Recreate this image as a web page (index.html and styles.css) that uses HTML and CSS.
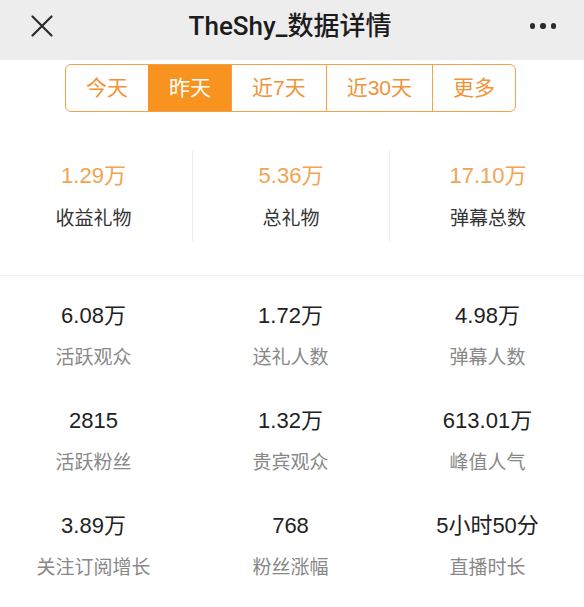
FILE: index.html
```html
<!DOCTYPE html>
<html lang="zh-CN">
<head>
<meta charset="utf-8">
<title>TheShy_数据详情</title>
<link rel="stylesheet" href="styles.css">
</head>
<body>
<div class="page">
  <header class="nav">
    <div class="nav-row">
      <div class="nav-left">
        <svg class="icon-close" width="22" height="22" viewBox="0 0 22 22"><path d="M1.5 1.5 L20.5 20.5 M20.5 1.5 L1.5 20.5" stroke="#2b2b2b" stroke-width="2.2" stroke-linecap="round" fill="none"/></svg>
      </div>
      <h1 class="nav-title">TheShy_数据详情</h1>
      <div class="nav-right">
        <span class="dot"></span><span class="dot"></span><span class="dot"></span>
      </div>
    </div>
  </header>

  <div class="tabs-wrap">
    <div class="tabs">
      <div class="tab">今天</div>
      <div class="tab active">昨天</div>
      <div class="tab">近7天</div>
      <div class="tab">近30天</div>
      <div class="tab">更多</div>
    </div>
  </div>

  <section class="summary">
    <div class="sum-item">
      <div class="sum-value">1.29万</div>
      <div class="sum-label">收益礼物</div>
    </div>
    <div class="sum-item">
      <div class="sum-value">5.36万</div>
      <div class="sum-label">总礼物</div>
    </div>
    <div class="sum-item">
      <div class="sum-value">17.10万</div>
      <div class="sum-label">弹幕总数</div>
    </div>
  </section>

  <section class="grid">
    <div class="cell"><div class="cell-value">6.08万</div><div class="cell-label">活跃观众</div></div>
    <div class="cell"><div class="cell-value">1.72万</div><div class="cell-label">送礼人数</div></div>
    <div class="cell"><div class="cell-value">4.98万</div><div class="cell-label">弹幕人数</div></div>
    <div class="cell"><div class="cell-value">2815</div><div class="cell-label">活跃粉丝</div></div>
    <div class="cell"><div class="cell-value">1.32万</div><div class="cell-label">贵宾观众</div></div>
    <div class="cell"><div class="cell-value">613.01万</div><div class="cell-label">峰值人气</div></div>
    <div class="cell"><div class="cell-value">3.89万</div><div class="cell-label">关注订阅增长</div></div>
    <div class="cell"><div class="cell-value">768</div><div class="cell-label">粉丝涨幅</div></div>
    <div class="cell"><div class="cell-value">5小时50分</div><div class="cell-label">直播时长</div></div>
  </section>
</div>
</body>
</html>
```

FILE: styles.css
```css
html, body {
  margin: 0;
  padding: 0;
  background: #ffffff;
}
body {
  font-family: "Liberation Sans", "Noto Sans CJK SC", sans-serif;
  color: #222;
  overflow: hidden;
}
.page {
  width: 591px;
  margin-left: -5px;
}
.nav {
  height: 60px;
  background: #ededed;
  margin-left: 5px;
  width: 584px;
}
.nav-row {
  height: 52px;
  display: grid;
  grid-template-columns: 1fr auto 1fr;
  align-items: center;
}
.nav-left {
  padding-left: 31px;
  display: flex;
  align-items: center;
}
.icon-close {
  display: block;
}
.nav-title {
  margin: 0;
  font-family: Roboto, "Noto Sans CJK SC", sans-serif;
  font-size: 26px;
  font-weight: 500;
  color: #1c1c1c;
  line-height: 30px;
  position: relative;
  left: -2px;
}
.nav-right {
  display: flex;
  justify-content: flex-end;
  gap: 5px;
  padding-right: 28px;
}
.dot {
  width: 5.5px;
  height: 5.5px;
  border-radius: 50%;
  background: #2b2b2b;
}
.tabs-wrap {
  display: flex;
  justify-content: center;
  margin-top: 4px;
}
.tabs {
  display: flex;
  border: 1.5px solid #f2a14d;
  border-radius: 6px;
  overflow: hidden;
  height: 46px;
}
.tab {
  padding: 0 20px;
  font-size: 21px;
  line-height: 46px;
  color: #ef9438;
  border-left: 1.5px solid #f2a14d;
}
.tab:first-child {
  border-left: none;
}
.tab.active {
  background: #f7931e;
  color: #ffffff;
  border-left-color: #f7931e;
}
.summary {
  display: grid;
  grid-template-columns: repeat(3, 1fr);
  margin-top: 38px;
  padding-bottom: 33px;
  border-bottom: 1px solid #efefef;
}
.sum-item {
  height: 92px;
  box-sizing: border-box;
  padding-top: 14px;
  text-align: center;
  border-left: 1.5px solid #eeeeee;
}
.sum-item:first-child {
  border-left: none;
}
.sum-value {
  font-size: 22px;
  line-height: 24px;
  color: #f4a352;
}
.sum-label {
  margin-top: 19px;
  font-size: 19px;
  line-height: 24px;
  color: #333;
}
.grid {
  display: grid;
  grid-template-columns: repeat(3, 1fr);
}
.cell {
  height: 105px;
  box-sizing: border-box;
  padding-top: 28px;
  text-align: center;
}
.cell-value {
  font-size: 22px;
  line-height: 24px;
  color: #222;
}
.cell-label {
  margin-top: 18px;
  font-size: 19px;
  line-height: 24px;
  color: #888;
}
```
